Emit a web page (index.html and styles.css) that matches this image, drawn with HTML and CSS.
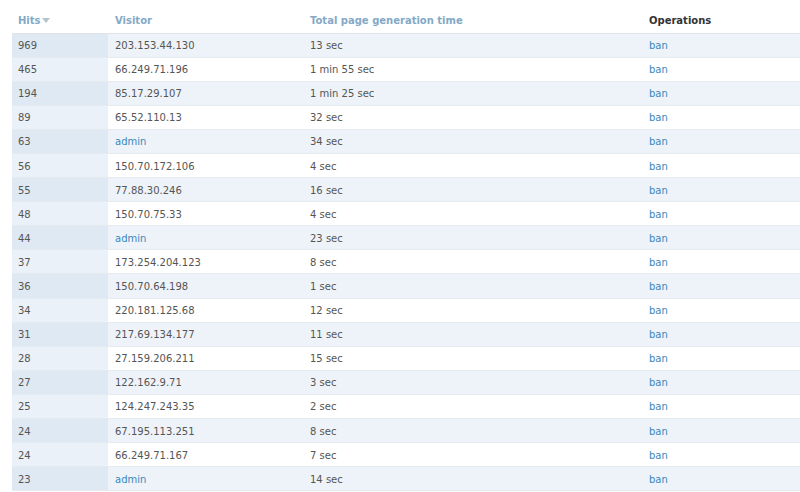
FILE: index.html
```html
<!DOCTYPE html>
<html>
<head>
<meta charset="utf-8">
<link rel="stylesheet" href="styles.css">
</head>
<body>
<table class="hits">
  <colgroup>
    <col class="c1"><col class="c2"><col class="c3"><col class="c4">
  </colgroup>
  <thead>
    <tr>
      <th><a class="hdr">Hits</a><span class="arrow"></span></th>
      <th><a class="hdr">Visitor</a></th>
      <th><a class="hdr">Total page generation time</a></th>
      <th class="plain">Operations</th>
    </tr>
  </thead>
  <tbody>
    <tr class="odd"><td class="active">969</td><td>203.153.44.130</td><td>13 sec</td><td><a>ban</a></td></tr>
    <tr class="even"><td class="active">465</td><td>66.249.71.196</td><td>1 min 55 sec</td><td><a>ban</a></td></tr>
    <tr class="odd"><td class="active">194</td><td>85.17.29.107</td><td>1 min 25 sec</td><td><a>ban</a></td></tr>
    <tr class="even"><td class="active">89</td><td>65.52.110.13</td><td>32 sec</td><td><a>ban</a></td></tr>
    <tr class="odd"><td class="active">63</td><td><a>admin</a></td><td>34 sec</td><td><a>ban</a></td></tr>
    <tr class="even"><td class="active">56</td><td>150.70.172.106</td><td>4 sec</td><td><a>ban</a></td></tr>
    <tr class="odd"><td class="active">55</td><td>77.88.30.246</td><td>16 sec</td><td><a>ban</a></td></tr>
    <tr class="even"><td class="active">48</td><td>150.70.75.33</td><td>4 sec</td><td><a>ban</a></td></tr>
    <tr class="odd"><td class="active">44</td><td><a>admin</a></td><td>23 sec</td><td><a>ban</a></td></tr>
    <tr class="even"><td class="active">37</td><td>173.254.204.123</td><td>8 sec</td><td><a>ban</a></td></tr>
    <tr class="odd"><td class="active">36</td><td>150.70.64.198</td><td>1 sec</td><td><a>ban</a></td></tr>
    <tr class="even"><td class="active">34</td><td>220.181.125.68</td><td>12 sec</td><td><a>ban</a></td></tr>
    <tr class="odd"><td class="active">31</td><td>217.69.134.177</td><td>11 sec</td><td><a>ban</a></td></tr>
    <tr class="even"><td class="active">28</td><td>27.159.206.211</td><td>15 sec</td><td><a>ban</a></td></tr>
    <tr class="odd"><td class="active">27</td><td>122.162.9.71</td><td>3 sec</td><td><a>ban</a></td></tr>
    <tr class="even"><td class="active">25</td><td>124.247.243.35</td><td>2 sec</td><td><a>ban</a></td></tr>
    <tr class="odd"><td class="active">24</td><td>67.195.113.251</td><td>8 sec</td><td><a>ban</a></td></tr>
    <tr class="even"><td class="active">24</td><td>66.249.71.167</td><td>7 sec</td><td><a>ban</a></td></tr>
    <tr class="odd"><td class="active">23</td><td><a>admin</a></td><td>14 sec</td><td><a>ban</a></td></tr>
  </tbody>
</table>
</body>
</html>
```

FILE: styles.css
```css
html, body {
  margin: 0;
  padding: 0;
  background: #fff;
}
body {
  padding-left: 12px;
  font-family: "DejaVu Sans", Verdana, sans-serif;
  font-size: 10px;
  color: #555;
}
.hits {
  border-collapse: collapse;
  table-layout: fixed;
  width: 800px;
}
.c1 { width: 96px; }
.c2 { width: 195px; }
.c3 { width: 339px; }
.hits th {
  height: 33px;
  padding: 8px 7px 0;
  text-align: left;
  font-weight: bold;
  font-size: 10px;
  border-bottom: 1px solid #dfe3e8;
  box-sizing: border-box;
  vertical-align: middle;
}
.hits th:first-child { padding-left: 6px; }
.hdr {
  color: #84a9c6;
  text-decoration: none;
}
.plain { color: #333; }
.arrow {
  display: inline-block;
  width: 0;
  height: 0;
  margin-left: 1px;
  border-left: 4px solid transparent;
  border-right: 4px solid transparent;
  border-top: 5px solid #b5c3cf;
  vertical-align: 1px;
}
.hits td {
  height: 24.1px;
  padding: 1px 7px 0;
  box-sizing: border-box;
  border-bottom: 1px solid #e6ebf0;
  vertical-align: middle;
  color: #555;
}
.hits td:first-child { padding-left: 6px; }
.odd { background: #edf3f9; }
.even { background: #fff; }
.odd td.active { background: #dfe9f3; }
.even td.active { background: #ebf1f8; }
.hits td a {
  color: #3b87bb;
  text-decoration: none;
}
```
